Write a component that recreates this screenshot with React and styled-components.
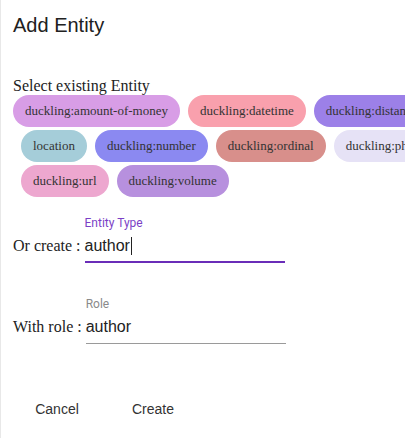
import React from 'react'
import styled, { createGlobalStyle } from 'styled-components'

const GlobalStyle = createGlobalStyle`
    html, body {
        margin: 0;
        padding: 0;
        background: #fff;
        overflow: hidden;
    }
`;

const Dialog = styled.div`
    width: 405px;
    height: 438px;
    box-sizing: border-box;
    border-left: 1px solid #e8e8e8;
    padding: 13px 0 0 12px;
    overflow: hidden;
`;

const Title = styled.h2`
    margin: 0;
    font-family: "Liberation Sans", Arial, sans-serif;
    font-size: 20px;
    line-height: 24px;
    font-weight: 400;
    color: #212121;
`;

const SectionLabel = styled.div`
    margin-top: 40px;
    font-family: "Liberation Serif", "Times New Roman", serif;
    font-size: 16px;
    line-height: 18px;
    color: #222;
`;

const ChipRows = styled.div`
    display: flex;
    flex-direction: column;
    gap: 3px;
`;

const ChipRow = styled.div`
    display: flex;
    gap: 8px;
    white-space: nowrap;
    padding-left: ${props => props.indent}px;
`;

const Chip = styled.span`
    display: inline-flex;
    align-items: center;
    flex-shrink: 0;
    height: 32px;
    padding: 0 12px;
    border-radius: 16px;
    background: ${props => props.color};
    font-family: "Liberation Serif", "Times New Roman", serif;
    font-size: 13px;
    color: #333;
`;

const FieldRow = styled.div`
    display: flex;
    align-items: flex-end;
    gap: 4px;
    margin-top: ${props => props.top}px;
`;

const Prefix = styled.span`
    font-family: "Liberation Serif", "Times New Roman", serif;
    font-size: 16px;
    line-height: 19px;
    padding-bottom: 8px;
    color: #222;
`;

const Field = styled.div`
    display: flex;
    flex-direction: column;
    width: 200px;
`;

const FieldLabel = styled.label`
    font-family: Roboto, "Liberation Sans", sans-serif;
    font-size: 12px;
    line-height: 16px;
    color: ${props => props.focused ? '#7b3fc6' : '#8a8a8a'};
`;

const InputText = styled.div`
    margin-top: 5px;
    font-family: "Liberation Sans", Arial, sans-serif;
    font-size: 16px;
    line-height: 19px;
    color: #222;
    display: flex;
    align-items: center;
`;

const Caret = styled.span`
    display: inline-block;
    width: 1px;
    height: 18px;
    background: #222;
    margin-left: 1px;
`;

const Underline = styled.div`
    margin-top: ${props => props.focused ? 6 : 7}px;
    height: ${props => props.focused ? 2 : 1}px;
    background: ${props => props.focused ? '#6a2db8' : '#9a9a9a'};
`;

const Actions = styled.div`
    display: flex;
    gap: 32px;
    margin: 47px 0 0 12px;
`;

const Button = styled.button`
    min-width: 64px;
    padding: 6px 8px;
    border: none;
    background: transparent;
    font-family: "Liberation Sans", Arial, sans-serif;
    font-size: 14px;
    line-height: 24px;
    color: #333;
    cursor: pointer;
`;

const chipRows = [
    {
        indent: 0, chips: [
            { label: "duckling:amount-of-money", color: "#d89de6" },
            { label: "duckling:datetime", color: "#f9a0ad" },
            { label: "duckling:distance", color: "#9c80e8" },
        ]
    },
    {
        indent: 8, chips: [
            { label: "location", color: "#a5cdd9" },
            { label: "duckling:number", color: "#8b89f1" },
            { label: "duckling:ordinal", color: "#d88f8b" },
            { label: "duckling:phone-number", color: "#e6e2f6" },
        ]
    },
    {
        indent: 8, chips: [
            { label: "duckling:url", color: "#eda7cf" },
            { label: "duckling:volume", color: "#b790de" },
        ]
    }
]

function App() {
    return (
        <>
            <GlobalStyle />
            <Dialog>
                <Title>Add Entity</Title>

                <SectionLabel>Select existing Entity</SectionLabel>
                <ChipRows>
                    {chipRows.map((row, index) => (
                        <ChipRow indent={row.indent} key={index}>
                            {row.chips.map(chip => (
                                <Chip color={chip.color} key={chip.label}>{chip.label}</Chip>
                            ))}
                        </ChipRow>
                    ))}
                </ChipRows>

                <FieldRow top={18}>
                    <Prefix>Or create :</Prefix>
                    <Field>
                        <FieldLabel focused>Entity Type</FieldLabel>
                        <InputText>author<Caret /></InputText>
                        <Underline focused />
                    </Field>
                </FieldRow>

                <FieldRow top={33}>
                    <Prefix>With role :</Prefix>
                    <Field>
                        <FieldLabel>Role</FieldLabel>
                        <InputText>author</InputText>
                        <Underline />
                    </Field>
                </FieldRow>

                <Actions>
                    <Button>Cancel</Button>
                    <Button>Create</Button>
                </Actions>
            </Dialog>
        </>
    )
}

export default App
